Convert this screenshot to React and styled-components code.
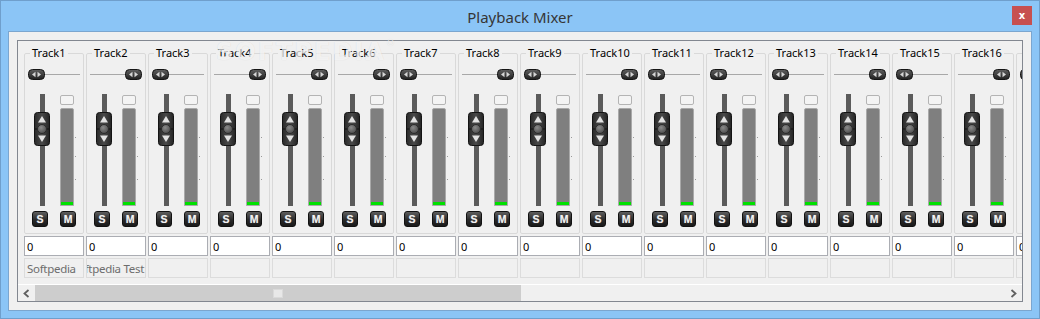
import styled, { createGlobalStyle } from 'styled-components';

const GlobalStyle = createGlobalStyle`
  html, body {
    margin: 0;
    padding: 0;
    background: #ffffff;
  }
  body {
    font-family: "Noto Sans", "Open Sans", sans-serif;
  }
`;

const tracks = [
  { name: 'Track1', pan: 'left', label: 'Softpedia' },
  { name: 'Track2', pan: 'right', label: 'Softpedia Test' },
  { name: 'Track3', pan: 'left' },
  { name: 'Track4', pan: 'right' },
  { name: 'Track5', pan: 'right' },
  { name: 'Track6', pan: 'right' },
  { name: 'Track7', pan: 'left' },
  { name: 'Track8', pan: 'right' },
  { name: 'Track9', pan: 'left' },
  { name: 'Track10', pan: 'right' },
  { name: 'Track11', pan: 'left' },
  { name: 'Track12', pan: 'left' },
  { name: 'Track13', pan: 'left' },
  { name: 'Track14', pan: 'right' },
  { name: 'Track15', pan: 'left' },
  { name: 'Track16', pan: 'right' },
  { name: 'Track17', pan: 'left' },
];

const Window = styled.div`
  width: 1040px;
  height: 319px;
  box-sizing: border-box;
  display: flex;
  flex-direction: column;
  padding: 0 7px 7px;
  background: #8bc5f6;
  border: 1px solid #6f9fcc;
`;

const TitleBar = styled.div`
  height: 30px;
  display: grid;
  grid-template-columns: 1fr auto 1fr;
  align-items: center;
`;

const Title = styled.div`
  grid-column: 2;
  font-family: "Noto Sans", "Open Sans", sans-serif;
  font-size: 15px;
  color: #363636;
  padding-top: 1px;
`;

const CloseButton = styled.div`
  grid-column: 3;
  justify-self: end;
  align-self: start;
  margin-top: 5px;
  width: 20px;
  height: 19px;
  display: flex;
  align-items: center;
  justify-content: center;
  background: #c75050;
  color: #ffffff;
  font-family: "DejaVu Sans", sans-serif;
  font-size: 10px;
  font-weight: bold;
  line-height: 1;
`;

const Client = styled.div`
  flex: 1;
  display: flex;
  min-height: 0;
  padding: 8px;
  background: #f0f0f0;
  border: 1px solid #7ba6cf;
`;

const Frame = styled.div`
  position: relative;
  flex: 1;
  min-width: 0;
  display: flex;
  flex-direction: column;
  border: 1px solid #828790;
  background: #f0f0f0;
`;

const Watermark = styled.div`
  position: absolute;
  left: 198px;
  top: -3px;
  font-family: "DejaVu Sans", sans-serif;
  font-size: 24px;
  font-weight: bold;
  letter-spacing: 2px;
  color: rgba(255, 255, 255, 0.7);
  text-shadow: 0 0 1px rgba(0, 0, 0, 0.12);
  pointer-events: none;

  sup {
    font-size: 9px;
    vertical-align: top;
  }
`;

const Viewport = styled.div`
  flex: 1;
  min-height: 0;
  display: flex;
  gap: 2px;
  overflow: hidden;
  padding: 5px 0 0 6px;
`;

const Strip = styled.div`
  flex: 0 0 60px;
  width: 60px;
  min-width: 0;
  display: flex;
  flex-direction: column;
  gap: 2px;
`;

const GroupBox = styled.fieldset`
  margin: 0;
  padding: 0;
  min-width: 0;
  border: 1px solid #d9d9d9;
  border-radius: 2px;
  height: 188px;
  box-sizing: border-box;
`;

const Legend = styled.legend`
  margin-left: 5px;
  padding: 0 2px;
  font-size: 11px;
  line-height: 14px;
  color: #000000;
  white-space: nowrap;
`;

const PanRow = styled.div`
  height: 11px;
  margin: 9px 3px 0;
  display: flex;
  justify-content: ${(p) => (p.$side === 'right' ? 'flex-end' : 'flex-start')};
  background: linear-gradient(#a8a8a8, #a8a8a8) center / 100% 1px no-repeat;
`;

const Body = styled.div`
  margin-top: 14px;
  padding-left: 7px;
  display: flex;
  gap: 10px;
`;

const Column = styled.div`
  display: flex;
  flex-direction: column;
  align-items: flex-start;
  gap: 5px;
`;

const Fader = styled.div`
  width: 16px;
  height: 112px;
  margin-left: 2px;
  display: flex;
  justify-content: center;
  background: linear-gradient(#5b5b5b, #5b5b5b) center / 5px 100% no-repeat;
  border-radius: 2px;
`;

const KnobSlot = styled.div`
  margin-top: 18px;
  height: 34px;
`;

const MeterStack = styled.div`
  display: flex;
  flex-direction: column;
  gap: 3px;
  padding-top: 1px;
`;

const MeterCap = styled.div`
  width: 14px;
  height: 10px;
  box-sizing: border-box;
  border: 1px solid #b4b4b4;
  border-radius: 2px;
  background: #f4f4f4;
`;

const Meter = styled.div`
  position: relative;
  width: 14px;
  height: 98px;
  box-sizing: border-box;
  border: 1px solid #a9a9a9;
  border-radius: 2px 2px 0 0;
  background: #7f7f7f;
  display: flex;
  flex-direction: column;
  justify-content: flex-end;
`;

const MeterLevel = styled.div`
  height: 3px;
  background: #00e000;
`;

const Tick = styled.span`
  position: absolute;
  right: -3px;
  width: 1px;
  height: 1px;
  background: #9a9a9a;
`;

const KeyButton = styled.div`
  width: 16px;
  height: 16px;
  box-sizing: border-box;
  display: flex;
  align-items: center;
  justify-content: center;
  border: 1px solid #111111;
  border-radius: 3px;
  background: linear-gradient(#5e5e5e, #2a2a2a 55%, #1a1a1a);
  color: #f2f2f2;
  font-family: "Liberation Sans", Arial, sans-serif;
  font-size: 10.5px;
  font-weight: bold;
  line-height: 1;
  text-shadow: 0 0 1px #888888;
`;

const ValueBox = styled.div`
  height: 20px;
  box-sizing: border-box;
  border: 1px solid #abadb3;
  background: #ffffff;
  padding-left: 2px;
  display: flex;
  align-items: center;
  font-size: 11px;
  color: #000000;
`;

const NameBox = styled.div`
  height: 20px;
  min-width: 0;
  box-sizing: border-box;
  border: 1px solid #dcdcdc;
  background: #f0f0f0;
  padding: 0 1px 0 2px;
  display: flex;
  align-items: center;
  justify-content: ${(p) => (p.$overflow ? 'flex-end' : 'flex-start')};
  overflow: hidden;
  white-space: nowrap;
  font-size: 11.5px;
  letter-spacing: -0.3px;
  color: #6d6d6d;

  span {
    flex-shrink: 0;
  }
`;

const ScrollBar = styled.div`
  height: 17px;
  box-sizing: border-box;
  border-top: 1px solid #ffffff;
  display: flex;
  background: #f0f0f0;
`;

const ScrollArrow = styled.div`
  flex: 0 0 17px;
  display: flex;
  align-items: center;
  justify-content: center;
`;

const ScrollTrack = styled.div`
  flex: 1;
  display: flex;
`;

const ScrollThumb = styled.div`
  width: 486px;
  background: #cdcdcd;
  display: flex;
  align-items: center;
  justify-content: center;
`;

const Grip = styled.div`
  width: 10px;
  height: 9px;
  background: #e8e8e8;
  border: 1px solid #dadada;
  box-sizing: border-box;
`;

function PanThumb() {
  return (
    <svg width="17" height="11" viewBox="0 0 17 11">
      <defs>
        <linearGradient id="panGrad" x1="0" y1="0" x2="0" y2="1">
          <stop offset="0" stopColor="#606060" />
          <stop offset="1" stopColor="#202020" />
        </linearGradient>
      </defs>
      <rect x="0.5" y="0.5" width="16" height="10" rx="4" fill="url(#panGrad)" stroke="#151515" />
      <path d="M7.5 2.8 L4 5.5 L7.5 8.2 Z" fill="#d6d6d6" />
      <path d="M9.5 2.8 L13 5.5 L9.5 8.2 Z" fill="#d6d6d6" />
    </svg>
  );
}

function Knob() {
  return (
    <svg width="16" height="34" viewBox="0 0 16 34">
      <defs>
        <linearGradient id="knobGrad" x1="0" y1="0" x2="1" y2="0">
          <stop offset="0" stopColor="#2a2a2a" />
          <stop offset="0.5" stopColor="#4a4a4a" />
          <stop offset="1" stopColor="#242424" />
        </linearGradient>
        <radialGradient id="ballGrad" cx="0.4" cy="0.35" r="0.7">
          <stop offset="0" stopColor="#8a8a8a" />
          <stop offset="1" stopColor="#4a4a4a" />
        </radialGradient>
      </defs>
      <rect x="0.5" y="0.5" width="15" height="33" rx="3" fill="url(#knobGrad)" stroke="#141414" />
      <path d="M8 4 L12 10.5 L4 10.5 Z" fill="#e2e2e2" />
      <line x1="1" y1="17" x2="15" y2="17" stroke="#111111" />
      <circle cx="8" cy="17" r="4.5" fill="url(#ballGrad)" stroke="#2a2a2a" />
      <path d="M4 23.5 L12 23.5 L8 30 Z" fill="#e2e2e2" />
    </svg>
  );
}

function Chevron({ dir }) {
  const d = dir === 'left' ? 'M5.5 1 L1.5 4.5 L5.5 8' : 'M1.5 1 L5.5 4.5 L1.5 8';
  return (
    <svg width="7" height="9" viewBox="0 0 7 9">
      <path d={d} fill="none" stroke="#606060" strokeWidth="1.8" />
    </svg>
  );
}

function TrackStrip({ track }) {
  return (
    <Strip>
      <GroupBox>
        <Legend>{track.name}</Legend>
        <PanRow $side={track.pan}>
          <PanThumb />
        </PanRow>
        <Body>
          <Column>
            <Fader>
              <KnobSlot>
                <Knob />
              </KnobSlot>
            </Fader>
            <KeyButton>S</KeyButton>
          </Column>
          <Column>
            <MeterStack>
              <MeterCap />
              <Meter>
                <Tick style={{ top: 28 }} />
                <Tick style={{ top: 47 }} />
                <Tick style={{ top: 70 }} />
                <MeterLevel />
              </Meter>
            </MeterStack>
            <KeyButton>M</KeyButton>
          </Column>
        </Body>
      </GroupBox>
      <ValueBox>0</ValueBox>
      <NameBox $overflow={track.label === 'Softpedia Test'}>
        <span>{track.label || ''}</span>
      </NameBox>
    </Strip>
  );
}

export default function App() {
  return (
    <>
      <GlobalStyle />
      <Window>
        <TitleBar>
          <Title>Playback Mixer</Title>
          <CloseButton>x</CloseButton>
        </TitleBar>
        <Client>
          <Frame>
            <Viewport>
              {tracks.map((t) => (
                <TrackStrip key={t.name} track={t} />
              ))}
            </Viewport>
            <ScrollBar>
              <ScrollArrow>
                <Chevron dir="left" />
              </ScrollArrow>
              <ScrollTrack>
                <ScrollThumb>
                  <Grip />
                </ScrollThumb>
              </ScrollTrack>
              <ScrollArrow>
                <Chevron dir="right" />
              </ScrollArrow>
            </ScrollBar>
            <Watermark>
              SOFTPEDIA<sup>®</sup>
            </Watermark>
          </Frame>
        </Client>
      </Window>
    </>
  );
}
